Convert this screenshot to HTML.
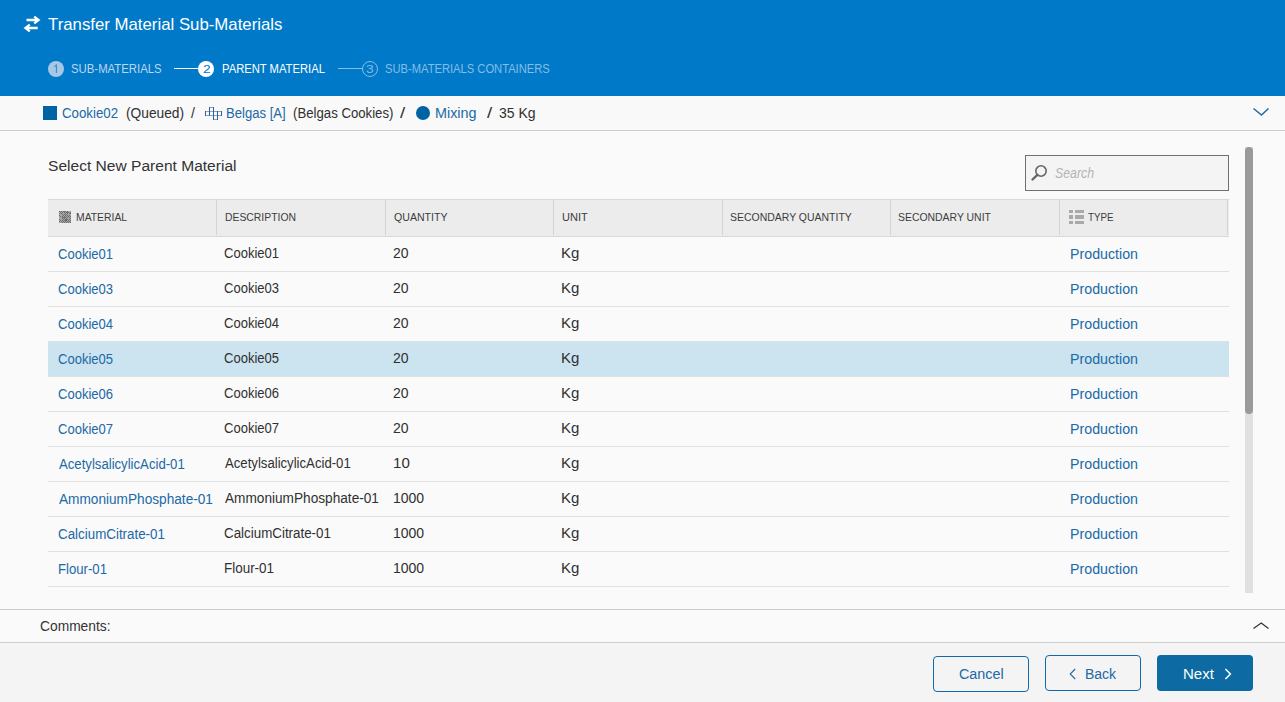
<!DOCTYPE html>
<html><head><meta charset="utf-8">
<style>
*{box-sizing:border-box;margin:0;padding:0}
html,body{width:1285px;height:702px;overflow:hidden;background:#fafafa;font-family:"Liberation Sans",sans-serif;color:#222;position:relative}
.a{position:absolute}
.t{position:absolute;white-space:nowrap;transform-origin:0 0;font-family:"Liberation Sans",sans-serif}
.circ{position:absolute;width:16px;height:16px;border-radius:50%;top:61px;font-size:10px;line-height:16px;text-align:center;font-family:"Liberation Sans",sans-serif}
.sep{position:absolute;top:200px;width:1px;height:35px;background:#d4d4d4}
.rb{position:absolute;left:48px;width:1181px;height:1px;background:#e0e0e0}
</style></head><body>
<!-- header -->
<div class="a" style="left:0;top:0;width:1285px;height:96px;background:#0079c9"></div>
<svg class="a" style="left:0;top:0" width="50" height="40" viewBox="0 0 50 40">
<path d="M26.5 20H39M34.2 16.6L38.6 20 34.2 23.4M37.7 28H25M29.8 24.6L25.4 28 29.8 31.4" fill="none" stroke="#fff" stroke-width="2.3" stroke-linecap="butt"/>
</svg>
<div class="circ" style="left:48px;background:#a6c8e4"></div>
<svg class="a" style="left:48px;top:61px" width="16" height="16" viewBox="48 61 16 16"><path d="M54.3 66.6L56.4 65V73" fill="none" stroke="#3d88c6" stroke-width="1.1"/></svg>
<div class="a" style="left:174px;top:68px;width:25px;height:1px;background:#fff"></div>
<div class="circ" style="left:198px;background:#fff"></div>
<div class="a" style="left:338px;top:68px;width:25px;height:1px;background:#84bde6"></div>
<div class="circ" style="left:362px;border:1px solid #84bde6"></div>

<!-- breadcrumb -->
<div class="a" style="left:0;top:96px;width:1285px;height:34px;background:#f9f9f9"></div>
<div class="a" style="left:0;top:130px;width:1285px;height:1px;background:#cdcdcd"></div>
<div class="a" style="left:43px;top:106px;width:14px;height:14px;background:#0064a3"></div>
<svg class="a" style="left:200px;top:100px" width="30" height="25" viewBox="200 100 30 25"><rect x="209" y="107" width="5" height="1" fill="#a0a0a0"/><rect x="205" y="111" width="17" height="1" fill="#a0a0a0"/><rect x="205" y="115" width="17" height="1" fill="#a0a0a0"/><rect x="213" y="119" width="5" height="1" fill="#a0a0a0"/><rect x="205" y="111" width="1" height="5" fill="#2462b8"/><rect x="209" y="107" width="1" height="9" fill="#2462b8"/><rect x="213" y="107" width="1" height="13" fill="#2462b8"/><rect x="217" y="111" width="1" height="9" fill="#2462b8"/><rect x="221" y="111" width="1" height="5" fill="#2462b8"/></svg>
<div class="a" style="left:416px;top:106px;width:14px;height:14px;border-radius:50%;background:#0064a3"></div>
<svg class="a" style="left:1250px;top:105px" width="22" height="14" viewBox="0 0 22 14">
<path d="M3.5 3.5L11.5 10 18.5 3.5" fill="none" stroke="#1f6aa5" stroke-width="1.5"/>
</svg>

<!-- search -->
<div class="a" style="left:1025px;top:155px;width:204px;height:36px;background:#f4f4f4;border:1px solid #707070"></div>
<svg class="a" style="left:1028px;top:160px" width="24" height="24" viewBox="0 0 24 24">
<circle cx="13" cy="11" r="5.2" fill="none" stroke="#666" stroke-width="1.6"/>
<path d="M9.4 14.8L4.5 19.5" stroke="#666" stroke-width="2.4" stroke-linecap="round"/>
</svg>

<!-- table header -->
<div class="a" style="left:48px;top:199px;width:1181px;height:38px;background:#ececec;border-top:1px solid #d9d9d9;border-bottom:1px solid #d9d9d9"></div>
<div class="sep" style="left:216px"></div>
<div class="sep" style="left:385px"></div>
<div class="sep" style="left:553px"></div>
<div class="sep" style="left:722px"></div>
<div class="sep" style="left:890px"></div>
<div class="sep" style="left:1059px"></div>
<div class="sep" style="left:1227px"></div>
<svg class="a" style="left:59px;top:211px" width="12" height="12" viewBox="0 0 12 12"><rect width="12" height="12" fill="#a8a8a8"/><rect x="0" y="0" width="1" height="1" fill="#6c6c6c"/><rect x="2" y="0" width="1" height="1" fill="#6c6c6c"/><rect x="4" y="0" width="1" height="1" fill="#6c6c6c"/><rect x="5" y="0" width="1" height="1" fill="#6c6c6c"/><rect x="6" y="0" width="1" height="1" fill="#6c6c6c"/><rect x="8" y="0" width="1" height="1" fill="#6c6c6c"/><rect x="1" y="1" width="1" height="1" fill="#6c6c6c"/><rect x="3" y="1" width="1" height="1" fill="#6c6c6c"/><rect x="5" y="1" width="1" height="1" fill="#6c6c6c"/><rect x="7" y="1" width="1" height="1" fill="#6c6c6c"/><rect x="8" y="1" width="1" height="1" fill="#6c6c6c"/><rect x="9" y="1" width="1" height="1" fill="#6c6c6c"/><rect x="11" y="1" width="1" height="1" fill="#6c6c6c"/><rect x="0" y="2" width="1" height="1" fill="#6c6c6c"/><rect x="2" y="2" width="1" height="1" fill="#6c6c6c"/><rect x="6" y="2" width="1" height="1" fill="#6c6c6c"/><rect x="8" y="2" width="1" height="1" fill="#6c6c6c"/><rect x="10" y="2" width="1" height="1" fill="#6c6c6c"/><rect x="11" y="2" width="1" height="1" fill="#6c6c6c"/><rect x="3" y="3" width="1" height="1" fill="#6c6c6c"/><rect x="5" y="3" width="1" height="1" fill="#6c6c6c"/><rect x="7" y="3" width="1" height="1" fill="#6c6c6c"/><rect x="0" y="4" width="1" height="1" fill="#6c6c6c"/><rect x="4" y="4" width="1" height="1" fill="#6c6c6c"/><rect x="6" y="4" width="1" height="1" fill="#6c6c6c"/><rect x="8" y="4" width="1" height="1" fill="#6c6c6c"/><rect x="10" y="4" width="1" height="1" fill="#6c6c6c"/><rect x="1" y="5" width="1" height="1" fill="#6c6c6c"/><rect x="3" y="5" width="1" height="1" fill="#6c6c6c"/><rect x="5" y="5" width="1" height="1" fill="#6c6c6c"/><rect x="7" y="5" width="1" height="1" fill="#6c6c6c"/><rect x="9" y="5" width="1" height="1" fill="#6c6c6c"/><rect x="11" y="5" width="1" height="1" fill="#6c6c6c"/><rect x="3" y="6" width="1" height="1" fill="#6c6c6c"/><rect x="4" y="6" width="1" height="1" fill="#6c6c6c"/><rect x="5" y="6" width="1" height="1" fill="#6c6c6c"/><rect x="6" y="6" width="1" height="1" fill="#6c6c6c"/><rect x="8" y="6" width="1" height="1" fill="#6c6c6c"/><rect x="10" y="6" width="1" height="1" fill="#6c6c6c"/><rect x="3" y="7" width="1" height="1" fill="#6c6c6c"/><rect x="5" y="7" width="1" height="1" fill="#6c6c6c"/><rect x="7" y="7" width="1" height="1" fill="#6c6c6c"/><rect x="11" y="7" width="1" height="1" fill="#6c6c6c"/><rect x="0" y="8" width="1" height="1" fill="#6c6c6c"/><rect x="4" y="8" width="1" height="1" fill="#6c6c6c"/><rect x="6" y="8" width="1" height="1" fill="#6c6c6c"/><rect x="7" y="8" width="1" height="1" fill="#6c6c6c"/><rect x="8" y="8" width="1" height="1" fill="#6c6c6c"/><rect x="10" y="8" width="1" height="1" fill="#6c6c6c"/><rect x="1" y="9" width="1" height="1" fill="#6c6c6c"/><rect x="3" y="9" width="1" height="1" fill="#6c6c6c"/><rect x="5" y="9" width="1" height="1" fill="#6c6c6c"/><rect x="6" y="9" width="1" height="1" fill="#6c6c6c"/><rect x="7" y="9" width="1" height="1" fill="#6c6c6c"/><rect x="9" y="9" width="1" height="1" fill="#6c6c6c"/><rect x="11" y="9" width="1" height="1" fill="#6c6c6c"/><rect x="0" y="10" width="1" height="1" fill="#6c6c6c"/><rect x="2" y="10" width="1" height="1" fill="#6c6c6c"/><rect x="4" y="10" width="1" height="1" fill="#6c6c6c"/><rect x="6" y="10" width="1" height="1" fill="#6c6c6c"/><rect x="8" y="10" width="1" height="1" fill="#6c6c6c"/><rect x="10" y="10" width="1" height="1" fill="#6c6c6c"/><rect x="3" y="11" width="1" height="1" fill="#6c6c6c"/><rect x="5" y="11" width="1" height="1" fill="#6c6c6c"/><rect x="7" y="11" width="1" height="1" fill="#6c6c6c"/><rect x="9" y="11" width="1" height="1" fill="#6c6c6c"/><rect x="11" y="11" width="1" height="1" fill="#6c6c6c"/></svg>
<div class="a" style="left:1069px;top:210px;width:4px;height:3px;background:#a9a9a9"></div>
<div class="a" style="left:1069px;top:215px;width:4px;height:4px;background:#a9a9a9"></div>
<div class="a" style="left:1069px;top:221px;width:4px;height:3px;background:#a9a9a9"></div>
<div class="a" style="left:1075px;top:210px;width:9px;height:3px;background:#a9a9a9"></div>
<div class="a" style="left:1075px;top:215px;width:9px;height:4px;background:#a9a9a9"></div>
<div class="a" style="left:1075px;top:221px;width:9px;height:3px;background:#a9a9a9"></div>

<!-- rows -->
<div class="a" style="left:48px;top:342px;width:1181px;height:34px;background:#cce3f0"></div>
<div class="rb" style="top:271px"></div>
<div class="rb" style="top:306px"></div>
<div class="rb" style="top:341px"></div>
<div class="rb" style="top:376px"></div>
<div class="rb" style="top:411px"></div>
<div class="rb" style="top:446px"></div>
<div class="rb" style="top:481px"></div>
<div class="rb" style="top:516px"></div>
<div class="rb" style="top:551px"></div>
<div class="rb" style="top:586px"></div>

<!-- scrollbar -->
<div class="a" style="left:1245px;top:147px;width:8px;height:446px;background:#e0e0e0"></div>
<div class="a" style="left:1245px;top:147px;width:8px;height:267px;background:#9a9a9a;border-radius:4px"></div>

<!-- comments -->
<div class="a" style="left:0;top:609px;width:1285px;height:1px;background:#cdcdcd"></div>
<div class="a" style="left:0;top:642px;width:1285px;height:1px;background:#cdcdcd"></div>
<svg class="a" style="left:1250px;top:618px" width="22" height="14" viewBox="0 0 22 14">
<path d="M3.5 10.5L11.2 5 18.5 10.5" fill="none" stroke="#333" stroke-width="1.2"/>
</svg>

<!-- footer -->
<div class="a" style="left:0;top:643px;width:1285px;height:59px;background:#f4f4f4"></div>
<div class="a" style="left:933px;top:656px;width:96px;height:36px;border:1px solid #1169ab;border-radius:4px"></div>
<div class="a" style="left:1045px;top:655px;width:96px;height:36px;border:1px solid #1169ab;border-radius:4px"></div>
<div class="a" style="left:1157px;top:655px;width:96px;height:36px;background:#0d6aa3;border-radius:4px"></div>
<svg class="a" style="left:1065px;top:665px" width="16" height="18" viewBox="0 0 16 18">
<path d="M10.2 4L5.2 9 10.2 14" fill="none" stroke="#1f6aa5" stroke-width="1.1"/>
</svg>
<svg class="a" style="left:1220px;top:665px" width="16" height="18" viewBox="0 0 16 18">
<path d="M5.4 4L10.4 9 5.4 14" fill="none" stroke="#fff" stroke-width="1.5"/>
</svg>

<div class="t" style="left:48.00px;top:16px;font-size:17px;line-height:17px;color:#fff;transform:scaleX(0.9873);">Transfer Material Sub-Materials</div>
<div class="t" style="left:71.05px;top:63px;font-size:12px;line-height:12px;color:#bcd6ec;transform:scaleX(0.9462);">SUB-MATERIALS</div>
<div class="t" style="left:222.06px;top:63px;font-size:12px;line-height:12px;color:#fff;transform:scaleX(0.9352);">PARENT MATERIAL</div>
<div class="t" style="left:385.07px;top:63px;font-size:12px;line-height:12px;color:#84bde6;transform:scaleX(0.9314);">SUB-MATERIALS CONTAINERS</div>
<div class="t" style="left:202.75px;top:64px;font-size:11px;line-height:11px;color:#0079c9;transform:scaleX(1.2500);">2</div>
<div class="t" style="left:365.75px;top:64px;font-size:11px;line-height:11px;color:#84bde6;transform:scaleX(1.2500);">3</div>
<div class="t" style="left:62.05px;top:106px;font-size:14px;line-height:14px;color:#2069a6;transform:scaleX(0.9474);">Cookie02</div>
<div class="t" style="left:126.02px;top:106px;font-size:14px;line-height:14px;color:#303030;transform:scaleX(0.9821);">(Queued)</div>
<div class="t" style="left:191.00px;top:106px;font-size:14px;line-height:14px;color:#303030;">/</div>
<div class="t" style="left:226.07px;top:106px;font-size:14px;line-height:14px;color:#2069a6;transform:scaleX(0.9344);">Belgas [A]</div>
<div class="t" style="left:293.06px;top:106px;font-size:14px;line-height:14px;color:#303030;transform:scaleX(0.9423);">(Belgas Cookies)</div>
<div class="t" style="left:400.00px;top:106px;font-size:14px;line-height:14px;color:#303030;transform:scaleX(1.3333);">/</div>
<div class="t" style="left:434.97px;top:106px;font-size:14px;line-height:14px;color:#2069a6;transform:scaleX(1.0263);">Mixing</div>
<div class="t" style="left:487.00px;top:106px;font-size:14px;line-height:14px;color:#303030;transform:scaleX(1.3333);">/</div>
<div class="t" style="left:499.00px;top:106px;font-size:14px;line-height:14px;color:#303030;">35 Kg</div>
<div class="t" style="left:47.99px;top:158px;font-size:15.4px;line-height:15.4px;color:#333;transform:scaleX(1.0109);">Select New Parent Material</div>
<div class="t" style="left:1055.12px;top:166px;font-size:14px;line-height:14px;color:#b4b4b4;transform:scaleX(0.8810);font-style:italic;">Search</div>
<div class="t" style="left:76.06px;top:212px;font-size:11px;line-height:11px;color:#3c3c3c;transform:scaleX(0.9423);">MATERIAL</div>
<div class="t" style="left:225.06px;top:212px;font-size:11px;line-height:11px;color:#3c3c3c;transform:scaleX(0.9444);">DESCRIPTION</div>
<div class="t" style="left:394.00px;top:212px;font-size:11px;line-height:11px;color:#3c3c3c;transform:scaleX(0.9630);">QUANTITY</div>
<div class="t" style="left:562.00px;top:212px;font-size:11px;line-height:11px;color:#3c3c3c;">UNIT</div>
<div class="t" style="left:730.05px;top:212px;font-size:11px;line-height:11px;color:#3c3c3c;transform:scaleX(0.9520);">SECONDARY QUANTITY</div>
<div class="t" style="left:898.05px;top:212px;font-size:11px;line-height:11px;color:#3c3c3c;transform:scaleX(0.9479);">SECONDARY UNIT</div>
<div class="t" style="left:1088.00px;top:212px;font-size:11px;line-height:11px;color:#3c3c3c;transform:scaleX(0.8889);">TYPE</div>
<div class="t" style="left:58.07px;top:247px;font-size:14px;line-height:14px;color:#2069a6;transform:scaleX(0.9298);">Cookie01</div>
<div class="t" style="left:224.07px;top:246px;font-size:14px;line-height:14px;color:#303030;transform:scaleX(0.9298);">Cookie01</div>
<div class="t" style="left:393.00px;top:246px;font-size:14px;line-height:14px;color:#303030;">20</div>
<div class="t" style="left:560.93px;top:246px;font-size:14px;line-height:14px;color:#303030;transform:scaleX(1.0714);">Kg</div>
<div class="t" style="left:1069.98px;top:247px;font-size:14px;line-height:14px;color:#2069a6;transform:scaleX(1.0156);">Production</div>
<div class="t" style="left:58.07px;top:282px;font-size:14px;line-height:14px;color:#2069a6;transform:scaleX(0.9298);">Cookie03</div>
<div class="t" style="left:224.07px;top:281px;font-size:14px;line-height:14px;color:#303030;transform:scaleX(0.9298);">Cookie03</div>
<div class="t" style="left:393.00px;top:281px;font-size:14px;line-height:14px;color:#303030;">20</div>
<div class="t" style="left:560.93px;top:281px;font-size:14px;line-height:14px;color:#303030;transform:scaleX(1.0714);">Kg</div>
<div class="t" style="left:1069.98px;top:282px;font-size:14px;line-height:14px;color:#2069a6;transform:scaleX(1.0156);">Production</div>
<div class="t" style="left:58.07px;top:317px;font-size:14px;line-height:14px;color:#2069a6;transform:scaleX(0.9298);">Cookie04</div>
<div class="t" style="left:224.07px;top:316px;font-size:14px;line-height:14px;color:#303030;transform:scaleX(0.9298);">Cookie04</div>
<div class="t" style="left:393.00px;top:316px;font-size:14px;line-height:14px;color:#303030;">20</div>
<div class="t" style="left:560.93px;top:316px;font-size:14px;line-height:14px;color:#303030;transform:scaleX(1.0714);">Kg</div>
<div class="t" style="left:1069.98px;top:317px;font-size:14px;line-height:14px;color:#2069a6;transform:scaleX(1.0156);">Production</div>
<div class="t" style="left:58.07px;top:352px;font-size:14px;line-height:14px;color:#2069a6;transform:scaleX(0.9298);">Cookie05</div>
<div class="t" style="left:224.07px;top:351px;font-size:14px;line-height:14px;color:#303030;transform:scaleX(0.9298);">Cookie05</div>
<div class="t" style="left:393.00px;top:351px;font-size:14px;line-height:14px;color:#303030;">20</div>
<div class="t" style="left:560.93px;top:351px;font-size:14px;line-height:14px;color:#303030;transform:scaleX(1.0714);">Kg</div>
<div class="t" style="left:1069.98px;top:352px;font-size:14px;line-height:14px;color:#2069a6;transform:scaleX(1.0156);">Production</div>
<div class="t" style="left:58.07px;top:387px;font-size:14px;line-height:14px;color:#2069a6;transform:scaleX(0.9298);">Cookie06</div>
<div class="t" style="left:224.07px;top:386px;font-size:14px;line-height:14px;color:#303030;transform:scaleX(0.9298);">Cookie06</div>
<div class="t" style="left:393.00px;top:386px;font-size:14px;line-height:14px;color:#303030;">20</div>
<div class="t" style="left:560.93px;top:386px;font-size:14px;line-height:14px;color:#303030;transform:scaleX(1.0714);">Kg</div>
<div class="t" style="left:1069.98px;top:387px;font-size:14px;line-height:14px;color:#2069a6;transform:scaleX(1.0156);">Production</div>
<div class="t" style="left:58.07px;top:422px;font-size:14px;line-height:14px;color:#2069a6;transform:scaleX(0.9298);">Cookie07</div>
<div class="t" style="left:224.07px;top:421px;font-size:14px;line-height:14px;color:#303030;transform:scaleX(0.9298);">Cookie07</div>
<div class="t" style="left:393.00px;top:421px;font-size:14px;line-height:14px;color:#303030;">20</div>
<div class="t" style="left:560.93px;top:421px;font-size:14px;line-height:14px;color:#303030;transform:scaleX(1.0714);">Kg</div>
<div class="t" style="left:1069.98px;top:422px;font-size:14px;line-height:14px;color:#2069a6;transform:scaleX(1.0156);">Production</div>
<div class="t" style="left:59.00px;top:457px;font-size:14px;line-height:14px;color:#2069a6;transform:scaleX(0.9394);">AcetylsalicylicAcid-01</div>
<div class="t" style="left:225.00px;top:456px;font-size:14px;line-height:14px;color:#303030;transform:scaleX(0.9394);">AcetylsalicylicAcid-01</div>
<div class="t" style="left:392.92px;top:456px;font-size:14px;line-height:14px;color:#303030;transform:scaleX(1.0769);">10</div>
<div class="t" style="left:560.93px;top:456px;font-size:14px;line-height:14px;color:#303030;transform:scaleX(1.0714);">Kg</div>
<div class="t" style="left:1069.98px;top:457px;font-size:14px;line-height:14px;color:#2069a6;transform:scaleX(1.0156);">Production</div>
<div class="t" style="left:59.00px;top:492px;font-size:14px;line-height:14px;color:#2069a6;transform:scaleX(0.9745);">AmmoniumPhosphate-01</div>
<div class="t" style="left:225.00px;top:491px;font-size:14px;line-height:14px;color:#303030;transform:scaleX(0.9745);">AmmoniumPhosphate-01</div>
<div class="t" style="left:393.00px;top:491px;font-size:14px;line-height:14px;color:#303030;">1000</div>
<div class="t" style="left:560.93px;top:491px;font-size:14px;line-height:14px;color:#303030;transform:scaleX(1.0714);">Kg</div>
<div class="t" style="left:1069.98px;top:492px;font-size:14px;line-height:14px;color:#2069a6;transform:scaleX(1.0156);">Production</div>
<div class="t" style="left:58.05px;top:527px;font-size:14px;line-height:14px;color:#2069a6;transform:scaleX(0.9545);">CalciumCitrate-01</div>
<div class="t" style="left:224.05px;top:526px;font-size:14px;line-height:14px;color:#303030;transform:scaleX(0.9545);">CalciumCitrate-01</div>
<div class="t" style="left:393.00px;top:526px;font-size:14px;line-height:14px;color:#303030;">1000</div>
<div class="t" style="left:560.93px;top:526px;font-size:14px;line-height:14px;color:#303030;transform:scaleX(1.0714);">Kg</div>
<div class="t" style="left:1069.98px;top:527px;font-size:14px;line-height:14px;color:#2069a6;transform:scaleX(1.0156);">Production</div>
<div class="t" style="left:58.06px;top:562px;font-size:14px;line-height:14px;color:#2069a6;transform:scaleX(0.9400);">Flour-01</div>
<div class="t" style="left:224.04px;top:561px;font-size:14px;line-height:14px;color:#303030;transform:scaleX(0.9600);">Flour-01</div>
<div class="t" style="left:393.00px;top:561px;font-size:14px;line-height:14px;color:#303030;">1000</div>
<div class="t" style="left:560.93px;top:561px;font-size:14px;line-height:14px;color:#303030;transform:scaleX(1.0714);">Kg</div>
<div class="t" style="left:1069.98px;top:562px;font-size:14px;line-height:14px;color:#2069a6;transform:scaleX(1.0156);">Production</div>
<div class="t" style="left:40.01px;top:619px;font-size:14px;line-height:14px;color:#333;transform:scaleX(0.9855);">Comments:</div>
<div class="t" style="left:958.98px;top:667px;font-size:14px;line-height:14px;color:#2069a6;transform:scaleX(1.0244);">Cancel</div>
<div class="t" style="left:1085.00px;top:667px;font-size:14px;line-height:14px;color:#2069a6;">Back</div>
<div class="t" style="left:1182.93px;top:667px;font-size:14px;line-height:14px;color:#fff;transform:scaleX(1.0741);">Next</div>
</body></html>
